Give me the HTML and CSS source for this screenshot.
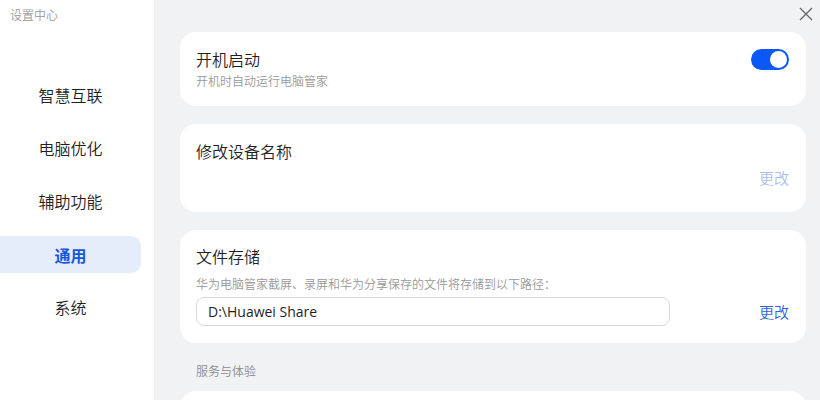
FILE: index.html
```html
<!DOCTYPE html>
<html lang="zh-CN">
<head>
<meta charset="utf-8">
<link rel="stylesheet" href="styles.css">
</head>
<body>
<div class="app">
  <aside class="sidebar">
    <div class="app-title">设置中心</div>
    <nav class="nav">
      <div class="nav-item">智慧互联</div>
      <div class="nav-item">电脑优化</div>
      <div class="nav-item">辅助功能</div>
      <div class="nav-item active">通用</div>
      <div class="nav-item">系统</div>
    </nav>
  </aside>
  <main class="main">
    <button class="close" aria-label="关闭">
      <svg width="14" height="14" viewBox="0 0 14 14"><path d="M1 1 L13 13 M13 1 L1 13" stroke="#666" stroke-width="1.3" fill="none"/></svg>
    </button>
    <section class="card card-row">
      <div class="card-text">
        <div class="card-title">开机启动</div>
        <div class="card-desc">开机时自动运行电脑管家</div>
      </div>
      <div class="toggle on"><span class="knob"></span></div>
    </section>
    <section class="card card-name">
      <div class="card-title">修改设备名称</div>
      <div class="action-row"><span class="link disabled">更改</span></div>
    </section>
    <section class="card card-storage">
      <div class="card-title">文件存储</div>
      <div class="card-desc desc-gap">华为电脑管家截屏、录屏和华为分享保存的文件将存储到以下路径：</div>
      <div class="path-row">
        <div class="path-box">D:\Huawei Share</div>
        <span class="link">更改</span>
      </div>
    </section>
    <div class="section-label">服务与体验</div>
    <section class="card card-last"></section>
  </main>
</div>
</body>
</html>
```
FILE: styles.css
```css
* { box-sizing: border-box; margin: 0; padding: 0; }
html, body { width: 820px; height: 400px; overflow: hidden; }
body {
  font-family: "Noto Sans CJK SC", "Noto Sans", sans-serif;
  background: #f1f2f4;
  color: #1f1f1f;
}
.app { display: flex; height: 400px; }
.sidebar {
  width: 154px;
  flex: none;
  background: #ffffff;
  padding-top: 6px;
}
.app-title {
  font-size: 12px;
  line-height: 18px;
  color: #9a9a9a;
  padding-left: 10px;
  font-weight: 350;
}
.nav {
  margin-top: 53px;
  width: 141px;
  display: flex;
  flex-direction: column;
  gap: 16px;
}
.nav-item {
  height: 37px;
  line-height: 37px;
  text-align: center;
  font-size: 16px;
  color: #1f1f1f;
  font-weight: 350;
}
.nav-item.active {
  background: #e5ecfa;
  border-radius: 0 10px 10px 0;
  color: #1458e0;
  font-weight: 700;
  line-height: 39px;
}
.main {
  flex: 1;
  position: relative;
  padding: 32px 14px 0 26px;
  display: flex;
  flex-direction: column;
  overflow: hidden;
}
.close {
  position: absolute;
  top: 7px;
  right: 7px;
  width: 14px;
  height: 14px;
  border: none;
  background: none;
  display: flex;
}
.card {
  flex: none;
  background: #ffffff;
  border-radius: 16px;
  padding: 16px 17px 0 16px;
  margin-bottom: 18px;
}
.card-row {
  height: 74px;
  display: flex;
  align-items: flex-start;
  justify-content: space-between;
}
.card-title {
  font-size: 16px;
  line-height: 22px;
  color: #1f1f1f;
  font-weight: 350;
}
.card-desc {
  font-size: 12px;
  line-height: 18px;
  color: #999999;
  margin-top: 2px;
  font-weight: 350;
}
.toggle {
  width: 38px;
  height: 21px;
  border-radius: 11px;
  background: #0a59f7;
  position: relative;
  margin-top: 1px;
}
.toggle .knob {
  position: absolute;
  right: 2px;
  top: 2px;
  width: 17px;
  height: 17px;
  border-radius: 50%;
  background: #ffffff;
}
.card-name { height: 88px; }
.action-row {
  display: flex;
  justify-content: flex-end;
  margin-top: 6px;
}
.link {
  font-size: 15px;
  line-height: 20px;
  color: #2d63d6;
  font-weight: 350;
}
.link.disabled { color: #a9c0ec; }
.card-storage { height: 113px; padding-top: 15px; }
.desc-gap { margin-top: 8px; }
.path-row {
  display: flex;
  align-items: center;
  justify-content: space-between;
  margin-top: 4px;
}
.path-box {
  width: 474px;
  height: 29px;
  border: 1px solid #d9d9d9;
  border-radius: 8px;
  padding-left: 11px;
  font-family: "Open Sans", "Noto Sans", sans-serif;
  font-size: 14px;
  line-height: 27px;
  color: #1f1f1f;
}
.section-label {
  flex: none;
  font-size: 12px;
  line-height: 18px;
  color: #8c8c8c;
  padding-left: 16px;
  margin-top: 1px;
  margin-bottom: 11px;
  font-weight: 350;
}
.card-last {
  height: 9px;
  margin-bottom: 0;
  border-radius: 16px 16px 0 0;
}
```
